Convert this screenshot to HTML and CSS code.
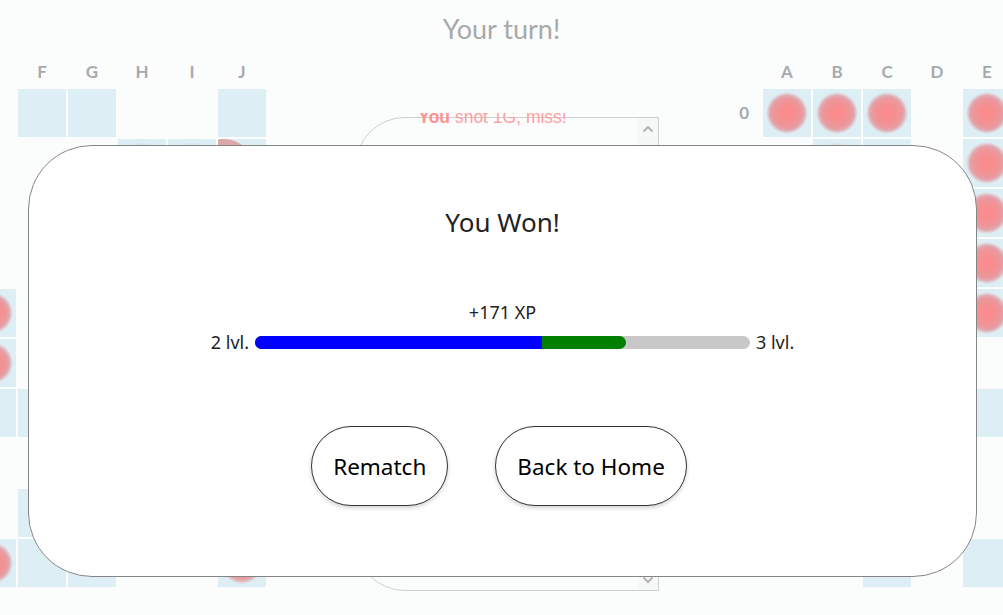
FILE: index.html
```html
<!DOCTYPE html>
<html lang="en">
<head>
<meta charset="utf-8">
<title>Battleship</title>
<link rel="stylesheet" href="styles.css">
</head>
<body>
<div class="page">
  <h1 class="title">Your turn!</h1>
  <div class="game">
    <div class="board">
      <div></div>
      <div class="cl">A</div><div class="cl">B</div><div class="cl">C</div><div class="cl">D</div><div class="cl">E</div><div class="cl">F</div><div class="cl">G</div><div class="cl">H</div><div class="cl">I</div><div class="cl">J</div>
      <div class="rl">0</div>
      <div class="cell w"></div><div class="cell"></div><div class="cell w"></div><div class="cell"></div><div class="cell"></div><div class="cell w"></div><div class="cell w"></div><div class="cell"></div><div class="cell"></div><div class="cell w"></div>
      <div class="rl">1</div>
      <div class="cell"></div><div class="cell w"></div><div class="cell"></div><div class="cell"></div><div class="cell"></div><div class="cell"></div><div class="cell"></div><div class="cell m"></div><div class="cell m"></div><div class="cell w"><div class="sunk"></div></div>
      <div class="rl">2</div>
      <div class="cell"></div><div class="cell"></div><div class="cell w"></div><div class="cell"></div><div class="cell"></div><div class="cell"></div><div class="cell w"></div><div class="cell"></div><div class="cell"></div><div class="cell"></div>
      <div class="rl">3</div>
      <div class="cell w"></div><div class="cell"></div><div class="cell"></div><div class="cell"></div><div class="cell"></div><div class="cell"></div><div class="cell"></div><div class="cell"></div><div class="cell w"></div><div class="cell"></div>
      <div class="rl">4</div>
      <div class="cell"></div><div class="cell"></div><div class="cell"></div><div class="cell w"></div><div class="cell h"></div><div class="cell"></div><div class="cell"></div><div class="cell"></div><div class="cell"></div><div class="cell"></div>
      <div class="rl">5</div>
      <div class="cell"></div><div class="cell w"></div><div class="cell"></div><div class="cell"></div><div class="cell h"></div><div class="cell"></div><div class="cell"></div><div class="cell w"></div><div class="cell"></div><div class="cell"></div>
      <div class="rl">6</div>
      <div class="cell"></div><div class="cell"></div><div class="cell"></div><div class="cell"></div><div class="cell w"></div><div class="cell w"></div><div class="cell"></div><div class="cell"></div><div class="cell"></div><div class="cell"></div>
      <div class="rl">7</div>
      <div class="cell w"></div><div class="cell"></div><div class="cell"></div><div class="cell"></div><div class="cell"></div><div class="cell"></div><div class="cell"></div><div class="cell"></div><div class="cell"></div><div class="cell w"></div>
      <div class="rl">8</div>
      <div class="cell"></div><div class="cell"></div><div class="cell w"></div><div class="cell"></div><div class="cell"></div><div class="cell w"></div><div class="cell"></div><div class="cell"></div><div class="cell"></div><div class="cell"></div>
      <div class="rl">9</div>
      <div class="cell"></div><div class="cell"></div><div class="cell"></div><div class="cell"></div><div class="cell h"></div><div class="cell w"></div><div class="cell w"></div><div class="cell"></div><div class="cell"></div><div class="cell h"></div>
    </div>

    <div class="center">
      <div class="chat-wrap">
        <div class="chat">
          <div class="log">
            <p class="msg"><b>You</b> shot 1G, miss!</p>
            <p class="msg">Enemy shot 4E, hit!</p>
            <p class="msg"><b>You</b> shot 2E, hit!</p>
          </div>
          <div class="scrollbar">
            <svg class="arrow" width="12" height="8" viewBox="0 0 12 8"><polyline points="1.5,6.5 6,2 10.5,6.5" fill="none" stroke="#b4b4b4" stroke-width="2"/></svg>
            <svg class="arrow" width="12" height="8" viewBox="0 0 12 8"><polyline points="1.5,1.5 6,6 10.5,1.5" fill="none" stroke="#b4b4b4" stroke-width="2"/></svg>
          </div>
        </div>
      </div>
    </div>

    <div class="board board-right">
      <div></div>
      <div class="cl">A</div><div class="cl">B</div><div class="cl">C</div><div class="cl">D</div><div class="cl">E</div><div class="cl">F</div><div class="cl">G</div><div class="cl">H</div><div class="cl">I</div><div class="cl">J</div>
      <div class="rl">0</div>
      <div class="cell h"></div><div class="cell h"></div><div class="cell h"></div><div class="cell"></div><div class="cell h"></div><div class="cell"></div><div class="cell w"></div><div class="cell"></div><div class="cell"></div><div class="cell"></div>
      <div class="rl">1</div>
      <div class="cell"></div><div class="cell m"></div><div class="cell w"></div><div class="cell"></div><div class="cell h"></div><div class="cell"></div><div class="cell"></div><div class="cell"></div><div class="cell w"></div><div class="cell"></div>
      <div class="rl">2</div>
      <div class="cell"></div><div class="cell"></div><div class="cell"></div><div class="cell w"></div><div class="cell h"></div><div class="cell"></div><div class="cell"></div><div class="cell"></div><div class="cell"></div><div class="cell"></div>
      <div class="rl">3</div>
      <div class="cell w"></div><div class="cell"></div><div class="cell"></div><div class="cell"></div><div class="cell h"></div><div class="cell"></div><div class="cell"></div><div class="cell w"></div><div class="cell"></div><div class="cell"></div>
      <div class="rl">4</div>
      <div class="cell"></div><div class="cell"></div><div class="cell w"></div><div class="cell"></div><div class="cell h"></div><div class="cell"></div><div class="cell"></div><div class="cell"></div><div class="cell"></div><div class="cell"></div>
      <div class="rl">5</div>
      <div class="cell"></div><div class="cell"></div><div class="cell"></div><div class="cell"></div><div class="cell"></div><div class="cell w"></div><div class="cell"></div><div class="cell"></div><div class="cell"></div><div class="cell"></div>
      <div class="rl">6</div>
      <div class="cell"></div><div class="cell w"></div><div class="cell"></div><div class="cell"></div><div class="cell w"></div><div class="cell"></div><div class="cell"></div><div class="cell"></div><div class="cell"></div><div class="cell w"></div>
      <div class="rl">7</div>
      <div class="cell"></div><div class="cell"></div><div class="cell"></div><div class="cell"></div><div class="cell"></div><div class="cell"></div><div class="cell w"></div><div class="cell"></div><div class="cell"></div><div class="cell"></div>
      <div class="rl">8</div>
      <div class="cell"></div><div class="cell"></div><div class="cell"></div><div class="cell w"></div><div class="cell"></div><div class="cell"></div><div class="cell"></div><div class="cell"></div><div class="cell"></div><div class="cell"></div>
      <div class="rl">9</div>
      <div class="cell"></div><div class="cell"></div><div class="cell w"></div><div class="cell"></div><div class="cell w"></div><div class="cell"></div><div class="cell"></div><div class="cell"></div><div class="cell w"></div><div class="cell"></div>
    </div>
  </div>
</div>

<div class="modal">
  <h2 class="modal-title">You Won!</h2>
  <div class="xp">+171 XP</div>
  <div class="level-row">
    <span class="lvl">2 lvl.</span>
    <div class="bar">
      <div class="bar-fill" style="width: 75%">
        <div class="bar-old" style="width: 77.4%"></div>
      </div>
    </div>
    <span class="lvl">3 lvl.</span>
  </div>
  <div class="actions">
    <button class="btn">Rematch</button>
    <button class="btn">Back to Home</button>
  </div>
</div>
</body>
</html>
```

FILE: styles.css
```css
html, body {
  margin: 0;
  padding: 0;
  height: 100%;
  overflow: hidden;
  background: #fbfdfd;
}

.page {
  font-family: Lato, "Noto Sans", sans-serif;
}

.title {
  margin: 0;
  height: 56px;
  line-height: 58px;
  text-align: center;
  font-size: 27px;
  font-weight: 400;
  color: #a9a9a9;
}

.game {
  display: flex;
  justify-content: center;
  align-items: flex-start;
  width: 100%;
}

.board {
  flex: 0 0 538px;
  display: grid;
  grid-template-columns: 38px repeat(10, 48px);
  grid-template-rows: 31px repeat(10, 48px);
  gap: 2px;
}

.board-right {
  margin-right: 14px;
}

.cl {
  text-align: center;
  font-size: 17px;
  font-weight: 700;
  line-height: 31px;
  color: #a5aaaf;
}

.rl {
  text-align: right;
  padding-right: 12px;
  font-size: 17px;
  font-weight: 700;
  line-height: 48px;
  color: #a5aaaf;
}

.cell {
  position: relative;
  overflow: hidden;
}

.cell.w {
  background: #deeef5;
}

.cell.h {
  background: radial-gradient(circle at 50% 50%, #ff8a8a 0px, #f58f91 8px, #ec979b 14px, #e1a6ad 17px, #deeef5 21px);
}

.cell.m {
  background: radial-gradient(circle at 50% 50%, #cfcfcf 0px, #d2d4d6 13px, #d6dadd 17px, #deeef5 21px);
}

.sunk {
  width: 37px;
  height: 48px;
  margin-left: -1px;
  background: #dba8a8;
  border-top-right-radius: 30px;
  border-top-left-radius: 4px;
}

.center {
  flex: 0 0 457px;
  box-sizing: border-box;
  padding-left: 89px;
}

.chat-wrap {
  margin-top: 57px;
  width: 304px;
  height: 478px;
  overflow: hidden;
}

.chat {
  margin-top: 4px;
  height: 474px;
  box-sizing: border-box;
  border: 1px solid #cecece;
  border-radius: 50px 0 0 50px;
  display: flex;
  background: #fbfdfd;
}

.log {
  flex: 1;
  margin-top: -11px;
  padding-right: 9px;
  font-family: "Liberation Sans", Arial, sans-serif;
  font-size: 17.5px;
  color: #ffa0a0;
  text-align: center;
}

.msg {
  margin: 0 0 30px;
  line-height: 20px;
}

.msg b {
  color: #ff9090;
}

.scrollbar {
  flex: 0 0 20px;
  background: #f6f7f7;
  display: flex;
  flex-direction: column;
  justify-content: space-between;
  align-items: center;
  padding: 7px 0 6px;
}

.arrow {
  display: block;
}

/* Modal overlay */
.modal {
  position: fixed;
  top: 145px;
  left: 28px;
  width: 949px;
  height: 432px;
  box-sizing: border-box;
  border: 1px solid #858585;
  border-radius: 64px;
  background: #fff;
  display: flex;
  flex-direction: column;
  align-items: center;
  font-family: "Noto Sans", "Open Sans", sans-serif;
  color: #222;
}

.modal-title {
  margin: 61px 0 0;
  font-size: 26px;
  font-weight: 400;
  line-height: 30px;
  color: #222;
}

.xp {
  margin-top: 65px;
  font-size: 18px;
  line-height: 20px;
}

.level-row {
  margin-top: 10px;
  display: flex;
  align-items: center;
  gap: 6px;
  height: 20px;
  font-size: 18px;
}

.lvl {
  line-height: 20px;
}

.bar {
  width: 495px;
  height: 13px;
  border-radius: 7px;
  background: #c8c8c8;
  overflow: hidden;
}

.bar-fill {
  height: 100%;
  background: #008000;
  border-radius: 0 7px 7px 0;
}

.bar-old {
  height: 100%;
  background: #0000ff;
}

.actions {
  margin-top: 74px;
  display: flex;
  gap: 47px;
  padding-right: 7px;
}

.btn {
  height: 80px;
  padding: 0 21px;
  border: 1px solid #333;
  border-radius: 40px;
  background: #fff;
  font-family: "Noto Sans", "Open Sans", sans-serif;
  font-size: 22.5px;
  color: #000;
  box-shadow: 0 2px 4px rgba(0, 0, 0, 0.18);
}
```
